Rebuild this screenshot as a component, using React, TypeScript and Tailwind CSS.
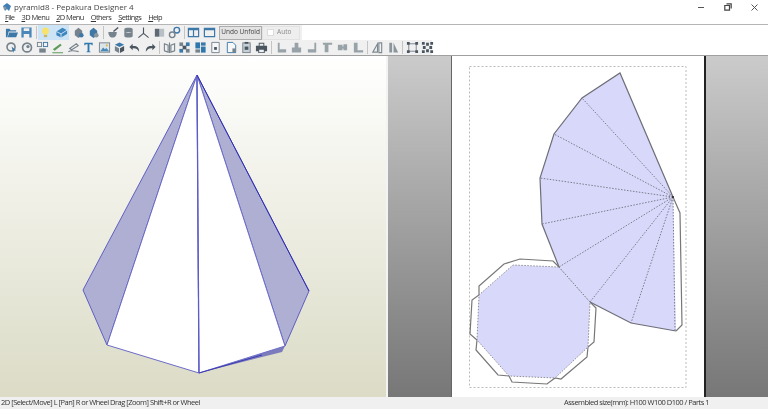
// App.tsx
import type { ReactNode } from "react";

const blue = "#3c78a8";
const gray = "#77838c";
const dark = "#4a5560";

const icons: Record<string, ReactNode> = {
  folder: <path d="M1 3h4l1 1.500h6v1.500H4L2.500 12H1zM4.500 7H14l-2 5H2.800z" fill={blue} />,
  save: <path d="M1.500 1.500h11v11h-11zM4 2.500v3h6v-3zM4 8.500v4h6v-4z" fill="#4b87b8" fillRule="evenodd" />,
  bulb: (
    <>
      <circle cx="7" cy="5.500" r="3.800" fill="#f7e26b" />
      <rect x="5.200" y="9.500" width="3.600" height="2.500" fill="#c9b860" />
    </>
  ),
  cube: (
    <>
      <path d="M1.500 6 8 2l5 2.500v4L6.500 12.500 1.500 10z" fill="#3f86bd" />
      <path d="M1.500 6l5 2.500 6.500-4M6.500 8.500v4" stroke="#cfe4f7" strokeWidth="1" fill="none" />
    </>
  ),
  stamp: (
    <>
      <path d="M3 5l4-3 4 3v5l-4 3-4-3z" fill={gray} />
      <circle cx="10" cy="10" r="2.500" fill={blue} />
    </>
  ),
  stampBlue: (
    <>
      <path d="M3 5l4-3 4 3v5l-4 3-4-3z" fill="#3f78a6" />
      <circle cx="10" cy="10" r="2.500" fill="#8b979f" />
    </>
  ),
  bowl: (
    <>
      <path d="M1.500 6.500h9c0 3.500-1.500 6-4.500 6s-4.500-2.500-4.500-6z" fill={gray} />
      <path d="M7 6l5-4.500" stroke={dark} strokeWidth="1.500" />
    </>
  ),
  can: <path d="M2.500 3.500C2.500 1.500 11.500 1.500 11.500 3.500v7.500c0 2-9 2-9 0zM3.500 6.500c2 1 5 1 7 0" fill={gray} />,
  axes: <path d="M7 1.500v6.500M7 8l-5.500 4.500M7 8l5.500 4.500" stroke={dark} strokeWidth="1.200" fill="none" />,
  book: (
    <>
      <rect x="2" y="3" width="5" height="8.500" fill="#5d6a74" />
      <rect x="7.500" y="3" width="4.500" height="8.500" fill="#b8c0c6" />
    </>
  ),
  chain: (
    <>
      <circle cx="9.500" cy="4.500" r="3" fill="none" stroke={blue} strokeWidth="1.500" />
      <circle cx="4.500" cy="9.500" r="3" fill="none" stroke={gray} strokeWidth="1.500" />
    </>
  ),
  split: <path d="M1.500 2.500h11v9h-11zM7 2.500v9M1.500 4h11" fill="none" stroke={blue} strokeWidth="1.300" />,
  single: <path d="M1.500 2.500h11v9h-11zM1.500 4h11" fill="none" stroke={blue} strokeWidth="1.300" />,
  select: (
    <>
      <circle cx="6.500" cy="6.500" r="4.300" fill="none" stroke={gray} strokeWidth="1.800" />
      <path d="M7 6l5 4-2.500.5L9 13z" fill={blue} />
    </>
  ),
  circle: (
    <>
      <circle cx="6.500" cy="7" r="4.800" fill="none" stroke={gray} strokeWidth="1.800" />
      <circle cx="7.500" cy="6" r="1.800" fill={gray} />
    </>
  ),
  pieces: (
    <>
      <rect x="1.500" y="1.500" width="4.500" height="4.500" fill="none" stroke={gray} />
      <rect x="8" y="1.500" width="4.500" height="4.500" fill="none" stroke={blue} />
      <rect x="3.500" y="8" width="7" height="4.500" fill={gray} />
    </>
  ),
  pen: <path d="M2 9l8-6 1.500 1.500L4 10.500zM1.500 12h11.500v1.300H1.500z" fill="#5d9a58" />,
  pen2: <path d="M3 8l7-5 2 2-7 4.500zM1.500 11.500c3-2 7-1 11 0" fill="none" stroke={gray} strokeWidth="1.300" />,
  text: <path d="M2.500 2h9v2.500h-1L10 3.500H8v7.500l1.200.5v.5H4.800v-.5L6 11V3.500H4l-.5 1h-1z" fill="#2f77ad" />,
  image: (
    <>
      <rect x="1.500" y="2" width="11" height="10" fill="#dbe5ec" stroke={gray} />
      <path d="M2.500 11l3-4 2 2 1.500-1.500 3 3.500z" fill="#4a8ab8" />
      <circle cx="9.500" cy="4.800" r="1.200" fill="#e0b94d" />
    </>
  ),
  box: (
    <>
      <path d="M7 1.500l5 2.500-5 2.500L2 4z" fill={blue} />
      <path d="M2 5.500l4.500 2.300V13L2 10.500z" fill={gray} />
      <path d="M12 5.500L7.500 7.800V13l4.500-2.500z" fill={dark} />
    </>
  ),
  undo: <path d="M12 11.500c0-5-3-6.500-7-6V3L1.500 6.500 5 10V7.800c3-.5 5 .5 7 3.700z" fill={dark} />,
  redo: <path d="M2 11.500c0-5 3-6.500 7-6V3l3.500 3.500L9 10V7.800c-3-.5-5 .5-7 3.700z" fill={dark} />,
  open: <path d="M1.500 3l4 1.500V12l-4-1.500zM12.500 3l-4 1.500V12l4-1.500zM7 1.500V13" fill="none" stroke={gray} strokeWidth="1.200" />,
  burst: (
    <>
      <rect x="1.500" y="1.500" width="4" height="4" fill={gray} />
      <rect x="8.500" y="1.500" width="4" height="4" fill={blue} />
      <rect x="1.500" y="8.500" width="4" height="4" fill={blue} />
      <rect x="8.500" y="8.500" width="4" height="4" fill={gray} />
      <rect x="5" y="5" width="4" height="4" fill={dark} />
    </>
  ),
  grid: (
    <>
      <rect x="1.500" y="1.500" width="5" height="6.500" fill="#2f77ad" />
      <rect x="7.500" y="1.500" width="5" height="3.500" fill={blue} />
      <rect x="7.500" y="6" width="5" height="6.500" fill="#2f77ad" />
      <rect x="1.500" y="9" width="5" height="3.500" fill={gray} />
    </>
  ),
  page: (
    <>
      <path d="M3 1.500h8v11H3z" fill="#f5f7f8" stroke={gray} />
      <rect x="5.500" y="6.500" width="3" height="3" fill={dark} />
    </>
  ),
  page2: (
    <>
      <path d="M2.500 1.500h6l3 3v8h-9z" fill="#f5f7f8" stroke={blue} />
      <path d="M8 8h3.500v4.500H8z" fill={gray} />
    </>
  ),
  clip: (
    <>
      <rect x="3" y="2" width="8" height="10.500" fill="#c6d0d6" stroke={gray} />
      <rect x="5" y="1" width="4" height="2" fill={dark} />
      <rect x="5" y="6" width="4" height="3.500" fill={dark} />
    </>
  ),
  print: <path d="M4 2h6v3h3v6h-2.500v2h-7v-2H1V5h3zM5 3v2h4V3zM4.500 9.500V12h5V9.500z" fill={dark} fillRule="evenodd" />,
  alignL: <path d="M3 2h2v7h7v3.500H3z" fill="#98a2a9" />,
  alignC: <path d="M5 2h4v5h3v5.500H2V7h3z" fill="#98a2a9" />,
  alignR: <path d="M9 2h2v10.500H2V9h7z" fill="#98a2a9" />,
  alignT: <path d="M2 2h10v2H8v8H4V4H2z" fill="#98a2a9" />,
  alignM: <path d="M2 4h5v2h1V3.500h4V10H8V8H7v2H2z" fill="#98a2a9" />,
  alignB: <path d="M2 2h4v8h6v2.500H2z" fill="#98a2a9" />,
  flipL: <path d="M2 12l5-9v9zM8.500 2h3v10.500h-3z" fill="none" stroke="#7d8990" strokeWidth="1.200" />,
  flipR: <path d="M2.500 2h3v10.500h-3zM7 2l5 10.500H7z" fill="#8a959c" />,
  frame: (
    <>
      <rect x="3" y="3" width="8" height="8" fill="none" stroke={gray} />
      <path d="M1 1h3v3H1zM10 1h3v3h-3zM1 10h3v3H1zM10 10h3v3h-3z" fill={dark} />
    </>
  ),
  dots: <path d="M1 1h3v3H1zM5.500 2h3v3h-3zM10 1h3v3h-3zM2 5.500h3v3H2zM9 5.500h3v3H9zM1 10h3v3H1zM5.500 9h3v3h-3zM10 10h3v3h-3z" fill={dark} />,
};

function Tool({ name, on }: { name: string; on?: boolean }) {
  return (
    <div className={`flex h-full w-[15.4px] shrink-0 items-center justify-center ${on ? "bg-[#cde4f7]" : ""}`}>
      <svg width="13" height="13" viewBox="0 0 14 14">
        {icons[name]}
      </svg>
    </div>
  );
}

function Sep() {
  return <div className="mx-[1.5px] h-[13px] w-px shrink-0 bg-[#c4c4c4]" />;
}

function Menu({ first, rest }: { first: string; rest: string }) {
  return (
    <span>
      <span className="underline">{first}</span>
      {rest}
    </span>
  );
}

function GrayPanel({ className }: { className: string }) {
  return <div className={`h-full bg-gradient-to-b from-[#cbcbcb] to-[#777777] ${className}`} />;
}

export default function App() {
  const row2a = ["select", "circle", "pieces", "pen", "pen2", "text", "image", "box", "undo", "redo"];
  const row2b = ["open", "burst", "grid", "page", "page2", "clip", "print"];
  const row2c = ["alignL", "alignC", "alignR", "alignT", "alignM", "alignB"];

  return (
    <div className="flex h-[409px] w-[768px] flex-col overflow-hidden bg-white font-['Open_Sans',sans-serif] text-[#222] blur-[0.35px]">
      {/* title bar */}
      <div className="flex h-[12px] shrink-0 items-center pt-[2px]">
        <svg className="ml-[2px] shrink-0" width="10" height="10" viewBox="0 0 10 10">
          <path d="M1 4l4-3 4 3-2 5-2-2-2 2z" fill="#3f7fb5" />
          <circle cx="3" cy="6" r="1.500" fill="#8a97a0" />
        </svg>
        <span className="ml-[2px] text-[8px] leading-none text-[#444]">pyramid8 - Pepakura Designer 4</span>
        <div className="ml-auto flex items-center pr-[10px]">
          <div className="h-px w-[6px] bg-[#555]" />
          <svg className="ml-[20px]" width="8" height="8" viewBox="0 0 8 8">
            <path d="M2.500.8h4.700v4.700M.8 2.500h4.700v4.700H.8z" fill="none" stroke="#444" strokeWidth="1.200" />
          </svg>
          <svg className="ml-[19px]" width="7" height="7" viewBox="0 0 7 7">
            <path d="M.5.5l6 6M6.500.5l-6 6" stroke="#555" strokeWidth="1" />
          </svg>
        </div>
      </div>

      {/* menu */}
      <div className="flex h-[12px] shrink-0 items-center gap-[7px] pl-[5px] text-[7.500px] leading-none tracking-[-0.6px] text-[#333]">
        <Menu first="F" rest="ile" />
        <Menu first="3" rest="D Menu" />
        <Menu first="2" rest="D Menu" />
        <Menu first="O" rest="thers" />
        <Menu first="S" rest="ettings" />
        <Menu first="H" rest="elp" />
      </div>

      {/* toolbar 1 */}
      <div className="flex h-[16px] shrink-0 border-t border-[#b5b5b5]">
        <div className="flex h-full w-[302px] items-center bg-[#f0f0f0] pl-[3.500px]">
          <Tool name="folder" />
          <Tool name="save" />
          <Sep />
          <Tool name="bulb" on />
          <Tool name="cube" on />
          <div className="w-[1.500px]" />
          <Tool name="stamp" />
          <Tool name="stampBlue" />
          <Sep />
          <Tool name="bowl" />
          <Tool name="can" />
          <Tool name="axes" />
          <Tool name="book" />
          <Tool name="chain" />
          <Sep />
          <Tool name="split" />
          <Tool name="single" />
          <div className="ml-[2px] flex h-[14px] w-[43px] items-center justify-center border border-[#adadad] bg-[#e3e3e3] text-[6.500px] leading-none text-[#444]">
            Undo Unfold
          </div>
          <div className="flex h-[14px] w-[38px] items-center border border-[#e2e2e2] bg-[#eeeeee] pl-[4px] text-[6.500px] leading-none text-[#888]">
            <span className="mr-[3px] h-[7px] w-[7px] border border-[#ddd] bg-white" />
            Auto
          </div>
        </div>
      </div>

      {/* toolbar 2 */}
      <div className="flex h-[16px] shrink-0 border-b border-[#a0a0a0]">
        <div className="flex h-full w-[432px] items-center bg-[#f0f0f0] pl-[4px]">
          {row2a.map((n) => (
            <Tool key={n} name={n} />
          ))}
          <Sep />
          {row2b.map((n) => (
            <Tool key={n} name={n} />
          ))}
          <Sep />
          {row2c.map((n) => (
            <Tool key={n} name={n} />
          ))}
          <Sep />
          <Tool name="flipL" />
          <Tool name="flipR" />
          <Sep />
          <Tool name="frame" />
          <Tool name="dots" />
        </div>
      </div>

      {/* panels */}
      <div className="flex min-h-0 flex-1">
        {/* 3D view */}
        <div className="h-full w-[386px] shrink-0 bg-gradient-to-b from-white to-[#dbdbc6]">
          <svg className="block" width="386" height="341" viewBox="0 56 386 341">
            <path d="M197 75L83 290L107 345Z" fill="#afafd3" stroke="#5f5fc4" strokeWidth="1" />
            <path d="M197 75L309 291L285 346Z" fill="#afafd3" stroke="#5f5fc4" strokeWidth="1" />
            <path d="M199 373L285 346L282 352Z" fill="#7c7cbc" />
            <path d="M197 75L107 345L199 373Z" fill="#fff" stroke="#6c6cc8" strokeWidth="1" />
            <path d="M197 75L285 346L199 373Z" fill="#fff" stroke="#6c6cc8" strokeWidth="1" />
            <path d="M197 75L199 373" stroke="#5c5cc8" strokeWidth="1.300" />
            <path d="M197 75L309 291" stroke="#2c2cb0" strokeWidth="1" />
            <path d="M199 373L262 355" stroke="#3a3ab4" strokeWidth="1" />
          </svg>
        </div>
        <div className="w-[2px] shrink-0 bg-[#f3f3f3]" />

        {/* 2D view */}
        <GrayPanel className="w-[63px] shrink-0" />
        <div className="h-full w-px shrink-0 bg-[#666]" />
        <div className="h-full w-[252px] shrink-0 bg-white">
          <svg className="block" width="252" height="341" viewBox="452 56 252 341">
            <rect x="469.500" y="66.500" width="216.500" height="321" fill="none" stroke="#bbb" strokeWidth="1" strokeDasharray="2 2" />
            {/* glue flaps */}
            <path
              d="M559 267L553 261L520 259L504 264L479 286L479 295L472 300L470 334L477 340L476 350L498 375L509 376L512 382L547 384L555 378L561 379L587 357L588 347L594 342L596 308L590 302"
              fill="#fff"
              stroke="#777"
              strokeWidth="1.200"
            />
            <path d="M673 197L680 213L682 325L676 331" fill="#fff" stroke="#777" strokeWidth="1.200" />
            {/* octagon base */}
            <path d="M559 267L590 302L588 347L555 378L509 376L477 340L479 295L513 265Z" fill="#d8d8fb" stroke="#777" strokeWidth="0.800" strokeDasharray="1.500 1.500" />
            {/* fan */}
            <path d="M673 197L620 73L582 98L554 134L540 178L542 224L559 267L590 302L631 323L676 331Z" fill="#d8d8fb" />
            <path d="M673 197L620 73L582 98L554 134L540 178L542 224L559 267" fill="none" stroke="#6e6e78" strokeWidth="1.200" />
            <path d="M590 302L631 323L676 331" fill="none" stroke="#6e6e78" strokeWidth="1.200" />
            <path
              d="M673 197L582 98M673 197L554 134M673 197L540 178M673 197L542 224M673 197L559 267M673 197L590 302M673 197L631 323M673 197L675 331M559 267L590 302"
              fill="none"
              stroke="#70707e"
              strokeWidth="0.900"
              strokeDasharray="1.500 1.500"
            />
            <circle cx="673" cy="197" r="1" fill="#222" />
          </svg>
        </div>
        <div className="h-full w-[2px] shrink-0 bg-[#222]" />
        <GrayPanel className="flex-1" />
      </div>

      {/* status */}
      <div className="flex h-[12px] shrink-0 items-center bg-[#f0f0f0] pl-[1px] text-[7.500px] leading-none tracking-[-0.5px] text-[#333]">
        <span className="w-[563px] shrink-0">2D [Select/Move] L [Pan] R or Wheel Drag [Zoom] Shift+R or Wheel</span>
        <span>Assembled size(mm): H100 W100 D100 / Parts 1</span>
      </div>
    </div>
  );
}
